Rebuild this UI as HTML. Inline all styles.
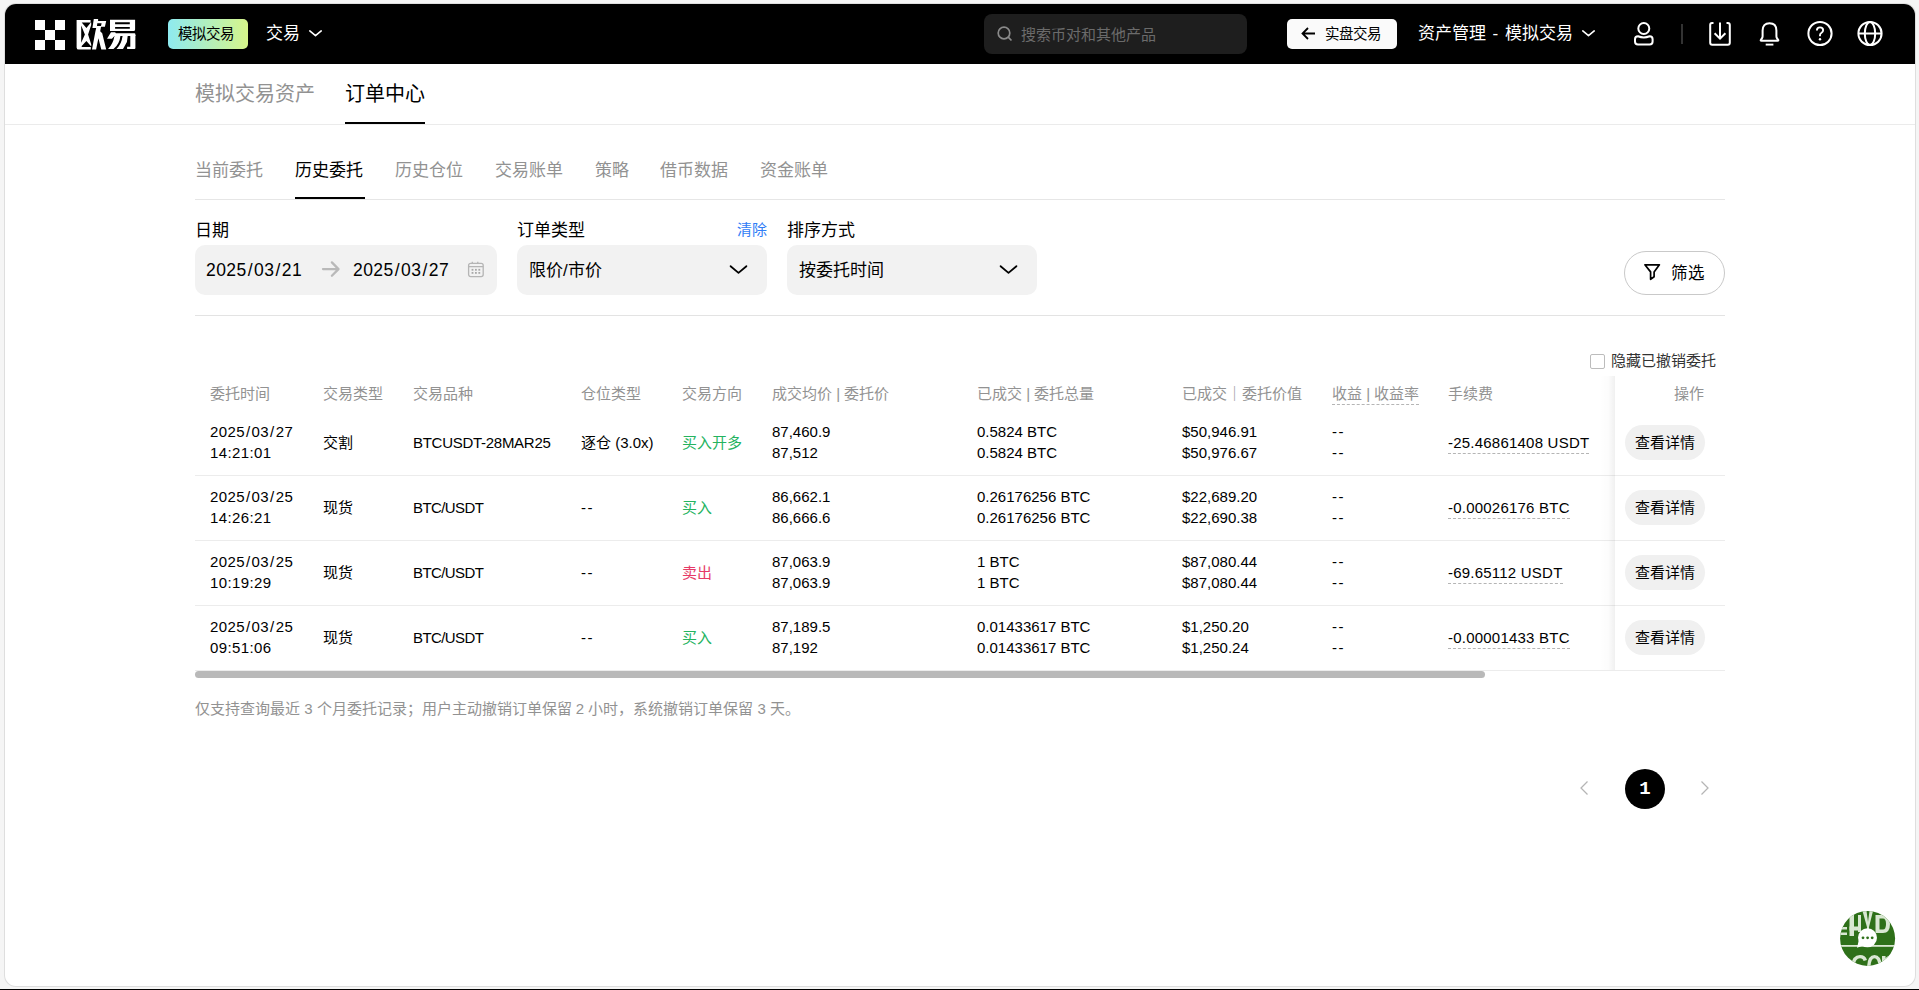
<!DOCTYPE html>
<html lang="zh-CN"><head><meta charset="utf-8">
<style>
*{margin:0;padding:0;box-sizing:border-box}
html,body{width:1919px;height:990px;overflow:hidden}
body{background:#f5f5f5;font-family:"Liberation Sans",sans-serif;color:#000;position:relative}
.a{position:absolute;white-space:nowrap}
#win{position:absolute;left:4px;top:3px;width:1912px;height:984px;background:#dedede;border-radius:12px}
#inner{position:absolute;left:1px;top:1px;right:1px;bottom:1px;background:#fff;border-radius:11px;overflow:hidden}
#hdr{position:absolute;left:0;top:0;width:100%;height:60px;background:#000}
#bline{position:absolute;left:0;top:989px;width:1919px;height:1px;background:#000}
.g{color:#929292}
.t15{font-size:15px;line-height:20px}
.t17{font-size:17.5px;line-height:24px}
.t20{font-size:20px;line-height:28px}
.box{position:absolute;background:#f2f2f2;border-radius:10px}
.hline{position:absolute;height:1px;background:#e6e6e6}
.green{color:#25b35f}
.red{color:#e63a66}
.btn{position:absolute;background:#f0f0f0;border-radius:17.5px;width:80px;height:35px;font-size:15px;line-height:35px;text-align:center}
.sl{font-style:normal;margin:0 1px 0 1px}
.dt{letter-spacing:0.4px}
.dash{border-bottom:1px dashed #b5b5b5}
</style></head><body>
<div id="win"><div id="inner">
<div id="hdr"></div>
</div></div>
<div id="bline"></div>

<!-- HEADER (page coords) -->
<svg class="a" style="left:35px;top:20px" width="30" height="30" viewBox="0 0 30 30"><g fill="#fff"><rect x="0" y="0" width="10" height="10"/><rect x="20" y="0" width="10" height="10"/><rect x="10" y="10" width="10" height="10"/><rect x="0" y="20" width="10" height="10"/><rect x="20" y="20" width="10" height="10"/></g></svg>
<svg class="a" style="left:0;top:0" width="140" height="60" viewBox="0 0 140 60"><g fill="#fff" fill-rule="evenodd">
<path d="M76.6 20H90.6V22.6H91.2V25L88.1 34.6L91.2 44.3V46H90.8V49.6H78.8Q76.6 49.6 76.6 47.4Z M81.7 22.6H90.8L86.4 27.9Z M81.2 25.5L84.9 34.6L81.2 42.8Z M81.7 46.9H90.8V45.9L86.4 41.1L81.7 45.9Z"/>
<path d="M93.8 19H98.1V21.1H106.2L104.9 26.8H101L100.2 31.3L102.2 33.2L106.2 49.4H101.3L98.4 38.3L96.1 49.4H92L95.4 31.5L96.2 28H92.4Z M97.3 23.2H101.6L101 25.9H97Z"/>
<path d="M110 19.8H135.1V29.4Q135.1 31.05 133.5 31.05H110Z M115.1 22.3V24.3H129.8V22.3Z M115.1 26.9V28.8H129.8V26.9Z"/>
<path d="M111 32.2H115.1L115.9 33.2H134.4Q135.4 33.2 135.4 34.2V35.9H114.5L111.9 38.7H107Z"/>
<path d="M114.5 35.9H120.4Q119.6 44 113.5 49H108Q113 44 114.5 35.9Z"/>
<path d="M122.6 35.9H127.7L126.9 42L123 49H116.5Q121.5 44 122.6 35.9Z"/>
<path d="M130.3 35H135.4V48Q135.4 49 134.4 49H127.1V46.7H130.3Z"/>
</g></svg>

<div class="a" style="left:168px;top:19px;width:80px;height:30px;border-radius:5px;background:linear-gradient(90deg,#8eeaf0,#d6f58a)"></div>
<div class="a" style="left:178px;top:24px;color:#000;font-size:14.5px;line-height:20px">模拟交易</div>
<div class="a" style="left:266px;top:22px;color:#fff;font-size:17px;line-height:24px">交易</div>
<svg class="a" style="left:308px;top:28px" width="14" height="10" viewBox="0 0 14 10"><path d="M1.8 2.9L7.5 7.6L13.2 2.9" stroke="#fff" stroke-width="1.6" stroke-linecap="round" stroke-linejoin="round" fill="none"/></svg>

<div class="a" style="left:984px;top:14px;width:263px;height:40px;border-radius:8px;background:#1e1e1e"></div>
<svg class="a" style="left:996px;top:25px" width="18" height="18" viewBox="0 0 18 18"><circle cx="8" cy="8" r="5.8" stroke="#8a8a8a" stroke-width="1.7" fill="none"/><path d="M12.2 12.2L15.5 15.5" stroke="#8a8a8a" stroke-width="1.7"/></svg>
<div class="a t15" style="left:1021px;top:25px;color:#6b6b6b">搜索币对和其他产品</div>

<div class="a" style="left:1287px;top:19px;width:110px;height:30px;border-radius:5px;background:#fafafa"></div>
<svg class="a" style="left:1300px;top:26px" width="17" height="15" viewBox="0 0 17 15"><path d="M2.5 7.5H15M8 2L2.5 7.5L8 13" stroke="#000" stroke-width="1.8" fill="none"/></svg>
<div class="a" style="left:1325px;top:24px;font-size:14.5px;line-height:20px">实盘交易</div>

<div class="a" style="left:1418px;top:22px;color:#fff;font-size:17px;line-height:24px;word-spacing:1.8px">资产管理 - 模拟交易</div>
<svg class="a" style="left:1581px;top:28px" width="14" height="10" viewBox="0 0 14 10"><path d="M1.8 2.9L7.5 7.6L13.2 2.9" stroke="#fff" stroke-width="1.6" stroke-linecap="round" stroke-linejoin="round" fill="none"/></svg>

<svg class="a" style="left:1630px;top:18px" width="28" height="30" viewBox="0 0 28 30"><circle cx="13.8" cy="10.5" r="5.5" stroke="#fff" stroke-width="2" fill="none"/><path d="M5 21.2Q5 18.3 8 18.3Q13.8 20.6 19.6 18.3Q22.6 18.3 22.6 21.2V23.6Q22.6 26.5 19.6 26.5H8Q5 26.5 5 23.6Z" stroke="#fff" stroke-width="2" fill="none"/></svg>
<div class="a" style="left:1681px;top:24px;width:2px;height:20px;background:#333"></div>
<svg class="a" style="left:1706px;top:18px" width="28" height="30" viewBox="0 0 28 30"><path d="M7.5 5H6Q4.2 5 4.2 7V24.8Q4.2 26.8 6.2 26.8H21.8Q23.8 26.8 23.8 24.8V7Q23.8 5 21.8 5H20.5" stroke="#fff" stroke-width="2" fill="none"/><path d="M14 4.5V20.6M8.6 15.2L14 20.6L19.4 15.2" stroke="#fff" stroke-width="2" fill="none"/></svg>
<svg class="a" style="left:1755px;top:18px" width="28" height="30" viewBox="0 0 28 30"><path d="M14.5 5.2C10 5.2 7.6 8 7.6 12.5V18.3Q7.6 19.4 6.9 20.4L5.9 21.8Q5.3 22.8 6.4 22.8H22.6Q23.7 22.8 23.1 21.8L22.1 20.4Q21.4 19.4 21.4 18.3V12.5C21.4 8 19 5.2 14.5 5.2Z" stroke="#fff" stroke-width="2" fill="none" stroke-linejoin="round"/><path d="M10.7 26.6H18.4" stroke="#fff" stroke-width="1.9"/></svg>
<svg class="a" style="left:1806px;top:19px" width="28" height="30" viewBox="0 0 28 30"><circle cx="14" cy="14.5" r="11.6" stroke="#fff" stroke-width="2" fill="none"/><path d="M10.9 11.6Q10.9 8.4 14 8.4Q17.1 8.4 17.1 11.2Q17.1 13 15.3 14Q14 14.7 14 16.3V17.3" stroke="#fff" stroke-width="1.9" fill="none"/><circle cx="14" cy="20.2" r="1.2" fill="#fff"/></svg>
<svg class="a" style="left:1856px;top:19px" width="28" height="30" viewBox="0 0 28 30"><circle cx="14" cy="14.5" r="11.6" stroke="#fff" stroke-width="2" fill="none"/><ellipse cx="14" cy="14.5" rx="5.2" ry="11.6" stroke="#fff" stroke-width="2" fill="none"/><path d="M2.4 14.5H25.6" stroke="#fff" stroke-width="2"/></svg>

<!-- NAV -->
<div class="a t20 g" style="left:195px;top:80px">模拟交易资产</div>
<div class="a t20" style="left:345px;top:80px">订单中心</div>
<div class="a" style="left:345px;top:122px;width:80px;height:2px;background:#000"></div>
<div class="hline" style="left:5px;top:124px;width:1910px;background:#ebebeb"></div>

<!-- SUBTABS -->
<div class="a t17 g" style="left:195px;top:159px;font-size:17px">当前委托</div>
<div class="a t17" style="left:295px;top:159px;font-size:17px">历史委托</div>
<div class="a t17 g" style="left:395px;top:159px;font-size:17px">历史仓位</div>
<div class="a t17 g" style="left:495px;top:159px;font-size:17px">交易账单</div>
<div class="a t17 g" style="left:595px;top:159px;font-size:17px">策略</div>
<div class="a t17 g" style="left:660px;top:159px;font-size:17px">借币数据</div>
<div class="a t17 g" style="left:760px;top:159px;font-size:17px">资金账单</div>
<div class="hline" style="left:195px;top:199px;width:1530px"></div>
<div class="a" style="left:295px;top:197px;width:70px;height:2px;background:#000"></div>

<!-- FILTERS -->
<div class="a t17" style="left:195px;top:219px;font-size:17px">日期</div>
<div class="box" style="left:195px;top:245px;width:302px;height:50px"></div>
<div class="a dt" style="left:206px;top:258px;font-size:17.5px;line-height:24px;letter-spacing:0.45px">2025<i class="sl">/</i>03<i class="sl">/</i>21</div>
<svg class="a" style="left:320px;top:260px" width="22" height="20" viewBox="0 0 22 20"><path d="M3 9.1H18.5M11.9 2.4L18.5 9.1L11.9 15.8" stroke="#b9b9b9" stroke-width="2.3" stroke-linecap="round" stroke-linejoin="round" fill="none"/></svg>
<div class="a dt" style="left:353px;top:258px;font-size:17.5px;line-height:24px;letter-spacing:0.45px">2025<i class="sl">/</i>03<i class="sl">/</i>27</div>
<svg class="a" style="left:466px;top:261px" width="19" height="18" viewBox="0 0 19 18"><rect x="2.6" y="2.4" width="14.6" height="13.2" rx="2" stroke="#b5b5b5" stroke-width="1.3" fill="none"/><path d="M2.6 5.6H17.2M6.3 0.8V3M11.8 0.8V3" stroke="#b5b5b5" stroke-width="1.3"/><g fill="#a8a8a8"><rect x="5.6" y="7.9" width="1.8" height="1.8"/><rect x="9" y="7.9" width="1.8" height="1.8"/><rect x="12.4" y="7.9" width="1.8" height="1.8"/><rect x="5.6" y="11" width="1.8" height="1.8"/><rect x="9" y="11" width="1.8" height="1.8"/><rect x="12.4" y="11" width="1.8" height="1.8"/></g></svg>

<div class="a t17" style="left:517px;top:219px;font-size:17px">订单类型</div>
<div class="a t15" style="left:737px;top:220px;color:#2f7df6">清除</div>
<div class="box" style="left:517px;top:245px;width:250px;height:50px"></div>
<div class="a t17" style="left:529px;top:259px;font-size:17px">限价/市价</div>
<svg class="a" style="left:728px;top:261px" width="20" height="16" viewBox="0 0 20 16"><path d="M2.6 5.2L10.5 11.9L18.4 5.2" stroke="#000" stroke-width="1.8" stroke-linecap="round" stroke-linejoin="round" fill="none"/></svg>

<div class="a t17" style="left:787px;top:219px;font-size:17px">排序方式</div>
<div class="box" style="left:787px;top:245px;width:250px;height:50px"></div>
<div class="a t17" style="left:799px;top:259px;font-size:17px">按委托时间</div>
<svg class="a" style="left:998px;top:261px" width="20" height="16" viewBox="0 0 20 16"><path d="M2.6 5.2L10.5 11.9L18.4 5.2" stroke="#000" stroke-width="1.8" stroke-linecap="round" stroke-linejoin="round" fill="none"/></svg>

<div class="a" style="left:1624px;top:251px;width:101px;height:44px;border:1px solid #c9c9c9;border-radius:22px"></div>
<svg class="a" style="left:1642px;top:262px" width="20" height="20" viewBox="0 0 20 20"><path d="M2.9 2.8H17.4L12.1 9.9V14.7L8.6 17.3V9.9Z" stroke="#000" stroke-width="1.7" fill="none" stroke-linejoin="round"/></svg>
<div class="a t17" style="left:1671px;top:261px;font-size:16.5px">筛选</div>

<div class="hline" style="left:195px;top:315px;width:1530px;background:#e3e3e3"></div>

<!-- TABLE -->
<div class="a" style="left:1590px;top:354px;width:15px;height:15px;border:1px solid #bcbcbc;border-radius:2px"></div>
<div class="a" style="left:1611px;top:351px;color:#333;font-size:15px;line-height:20px">隐藏已撤销委托</div>

<div class="a t15 g" style="left:210px;top:384px">委托时间</div>
<div class="a t15 g" style="left:323px;top:384px">交易类型</div>
<div class="a t15 g" style="left:413px;top:384px">交易品种</div>
<div class="a t15 g" style="left:581px;top:384px">仓位类型</div>
<div class="a t15 g" style="left:682px;top:384px">交易方向</div>
<div class="a t15 g" style="left:772px;top:384px">成交均价 | 委托价</div>
<div class="a t15 g" style="left:977px;top:384px">已成交 | 委托总量</div>
<div class="a t15 g" style="left:1182px;top:384px">已成交｜委托价值</div>
<div class="a t15 g dash" style="left:1332px;top:384px">收益 | 收益率</div>
<div class="a t15 g" style="left:1448px;top:384px">手续费</div>

<div class="hline" style="left:195px;top:475px;width:1530px;background:#ececec"></div>
<div class="hline" style="left:195px;top:540px;width:1530px;background:#ececec"></div>
<div class="hline" style="left:195px;top:605px;width:1530px;background:#ececec"></div>
<div class="hline" style="left:195px;top:670px;width:1530px;background:#ececec"></div>

<!-- row1 -->
<div class="a t15 dt" style="left:210px;top:422px;line-height:20.5px">2025<i class="sl">/</i>03<i class="sl">/</i>27<br>14:21:01</div>
<div class="a t15" style="left:323px;top:433px">交割</div>
<div class="a t15" style="left:413px;top:433px;letter-spacing:-0.28px">BTCUSDT-28MAR25</div>
<div class="a t15" style="left:581px;top:433px">逐仓 (3.0x)</div>
<div class="a t15 green" style="left:682px;top:433px">买入开多</div>
<div class="a t15" style="left:772px;top:422px;line-height:20.5px">87,460.9<br>87,512</div>
<div class="a t15" style="left:977px;top:422px;line-height:20.5px">0.5824 BTC<br>0.5824 BTC</div>
<div class="a t15" style="left:1182px;top:422px;line-height:20.5px">$50,946.91<br>$50,976.67</div>
<div class="a t15" style="left:1332px;top:422px;line-height:20.5px;letter-spacing:1.5px">--<br>--</div>
<div class="a t15 dash" style="left:1448px;top:433px;letter-spacing:0.22px">-25.46861408 USDT</div>

<!-- row2 -->
<div class="a t15 dt" style="left:210px;top:487px;line-height:20.5px">2025<i class="sl">/</i>03<i class="sl">/</i>25<br>14:26:21</div>
<div class="a t15" style="left:323px;top:498px">现货</div>
<div class="a t15" style="left:413px;top:498px;letter-spacing:-0.6px">BTC/USDT</div>
<div class="a t15" style="left:581px;top:498px;letter-spacing:1.5px">--</div>
<div class="a t15 green" style="left:682px;top:498px">买入</div>
<div class="a t15" style="left:772px;top:487px;line-height:20.5px">86,662.1<br>86,666.6</div>
<div class="a t15" style="left:977px;top:487px;line-height:20.5px">0.26176256 BTC<br>0.26176256 BTC</div>
<div class="a t15" style="left:1182px;top:487px;line-height:20.5px">$22,689.20<br>$22,690.38</div>
<div class="a t15" style="left:1332px;top:487px;line-height:20.5px;letter-spacing:1.5px">--<br>--</div>
<div class="a t15 dash" style="left:1448px;top:498px;letter-spacing:0.22px">-0.00026176 BTC</div>

<!-- row3 -->
<div class="a t15 dt" style="left:210px;top:552px;line-height:20.5px">2025<i class="sl">/</i>03<i class="sl">/</i>25<br>10:19:29</div>
<div class="a t15" style="left:323px;top:563px">现货</div>
<div class="a t15" style="left:413px;top:563px;letter-spacing:-0.6px">BTC/USDT</div>
<div class="a t15" style="left:581px;top:563px;letter-spacing:1.5px">--</div>
<div class="a t15 red" style="left:682px;top:563px">卖出</div>
<div class="a t15" style="left:772px;top:552px;line-height:20.5px">87,063.9<br>87,063.9</div>
<div class="a t15" style="left:977px;top:552px;line-height:20.5px">1 BTC<br>1 BTC</div>
<div class="a t15" style="left:1182px;top:552px;line-height:20.5px">$87,080.44<br>$87,080.44</div>
<div class="a t15" style="left:1332px;top:552px;line-height:20.5px;letter-spacing:1.5px">--<br>--</div>
<div class="a t15 dash" style="left:1448px;top:563px;letter-spacing:0.22px">-69.65112 USDT</div>

<!-- row4 -->
<div class="a t15 dt" style="left:210px;top:617px;line-height:20.5px">2025<i class="sl">/</i>03<i class="sl">/</i>25<br>09:51:06</div>
<div class="a t15" style="left:323px;top:628px">现货</div>
<div class="a t15" style="left:413px;top:628px;letter-spacing:-0.6px">BTC/USDT</div>
<div class="a t15" style="left:581px;top:628px;letter-spacing:1.5px">--</div>
<div class="a t15 green" style="left:682px;top:628px">买入</div>
<div class="a t15" style="left:772px;top:617px;line-height:20.5px">87,189.5<br>87,192</div>
<div class="a t15" style="left:977px;top:617px;line-height:20.5px">0.01433617 BTC<br>0.01433617 BTC</div>
<div class="a t15" style="left:1182px;top:617px;line-height:20.5px">$1,250.20<br>$1,250.24</div>
<div class="a t15" style="left:1332px;top:617px;line-height:20.5px;letter-spacing:1.5px">--<br>--</div>
<div class="a t15 dash" style="left:1448px;top:628px;letter-spacing:0.22px">-0.00001433 BTC</div>

<!-- sticky col -->
<div class="a" style="left:1600px;top:376px;width:15px;height:294px;background:linear-gradient(90deg,rgba(0,0,0,0),rgba(0,0,0,0.012) 55%,rgba(0,0,0,0.06))"></div>
<div class="a" style="left:1615px;top:376px;width:110px;height:294px;background:#fff"></div>
<div class="hline" style="left:1615px;top:475px;width:110px;background:#ececec"></div>
<div class="hline" style="left:1615px;top:540px;width:110px;background:#ececec"></div>
<div class="hline" style="left:1615px;top:605px;width:110px;background:#ececec"></div>
<div class="hline" style="left:1615px;top:670px;width:110px;background:#ececec"></div>
<div class="a t15 g" style="left:1674px;top:384px">操作</div>
<div class="btn" style="left:1625px;top:425px">查看详情</div>
<div class="btn" style="left:1625px;top:490px">查看详情</div>
<div class="btn" style="left:1625px;top:555px">查看详情</div>
<div class="btn" style="left:1625px;top:620px">查看详情</div>

<div class="a" style="left:195px;top:671px;width:1290px;height:7px;border-radius:4px;background:#b9b9b9"></div>

<div class="a t15 g" style="left:195px;top:699px">仅支持查询最近 3 个月委托记录；用户主动撤销订单保留 2 小时，系统撤销订单保留 3 天。</div>

<!-- pagination -->
<svg class="a" style="left:1576px;top:778px" width="16" height="20" viewBox="0 0 16 20"><path d="M11.5 3.5L5 10L11.5 16.5" stroke="#b5b5b5" stroke-width="1.25" fill="none"/></svg>
<div class="a" style="left:1625px;top:769px;width:40px;height:40px;border-radius:20px;background:#000;color:#fff;font-family:'Liberation Mono',monospace;font-weight:bold;font-size:19px;line-height:40px;text-align:center">1</div>
<svg class="a" style="left:1697px;top:778px" width="16" height="20" viewBox="0 0 16 20"><path d="M4.5 3.5L11 10L4.5 16.5" stroke="#b5b5b5" stroke-width="1.25" fill="none"/></svg>

<!-- chat widget -->
<svg class="a" style="left:1838px;top:909px" width="60" height="60" viewBox="0 0 60 60">
<defs><clipPath id="cc"><circle cx="29.6" cy="29.4" r="27.5"/></clipPath></defs>
<circle cx="29.6" cy="29.4" r="27.5" fill="#2e7019"/>
<g clip-path="url(#cc)" fill="#d9e7d2">
<rect x="0" y="36" width="60" height="1.8"/>
<rect x="0" y="18" width="9" height="2.5"/><rect x="0" y="23.5" width="9" height="2.5"/>
<rect x="11.5" y="6" width="4.5" height="21"/><rect x="20" y="6" width="3" height="17"/><rect x="11.5" y="17.5" width="11.5" height="4"/>
<path d="M24.5 2H28.5L31 20H29.5Z"/><path d="M35 2H31.5L29 20H30.5Z"/>
<path d="M37.5 6H45Q52 6 52 15Q52 24 45 24H37.5ZM41.5 9.5V20.5H45Q48 20.5 48 15Q48 9.5 45 9.5Z" fill-rule="evenodd"/>
<path d="M13 60Q13 46 22 46Q27.5 46 29 51L25.5 52Q25 49.2 22 49.2Q16.5 49.2 16.5 60Z"/>
<path d="M29 60Q29 46 36.5 46Q44 46 44 60H40.5Q40.5 49.2 36.5 49.2Q32.5 49.2 32.5 60Z"/>
<path d="M44 60V47H47.5V49Q49.5 46.5 53 46.5L52 50Q47.5 50 47.5 54V60Z"/>
</g>
<circle cx="29.5" cy="28.8" r="9.5" fill="#fff"/>
<path d="M21 30.5L19 38.8L26.5 36Z" fill="#fff"/>
<g fill="#2e7019"><circle cx="25" cy="28.8" r="1.4"/><circle cx="29.6" cy="28.8" r="1.4"/><circle cx="34.2" cy="28.8" r="1.4"/></g>
</svg>
</body></html>
